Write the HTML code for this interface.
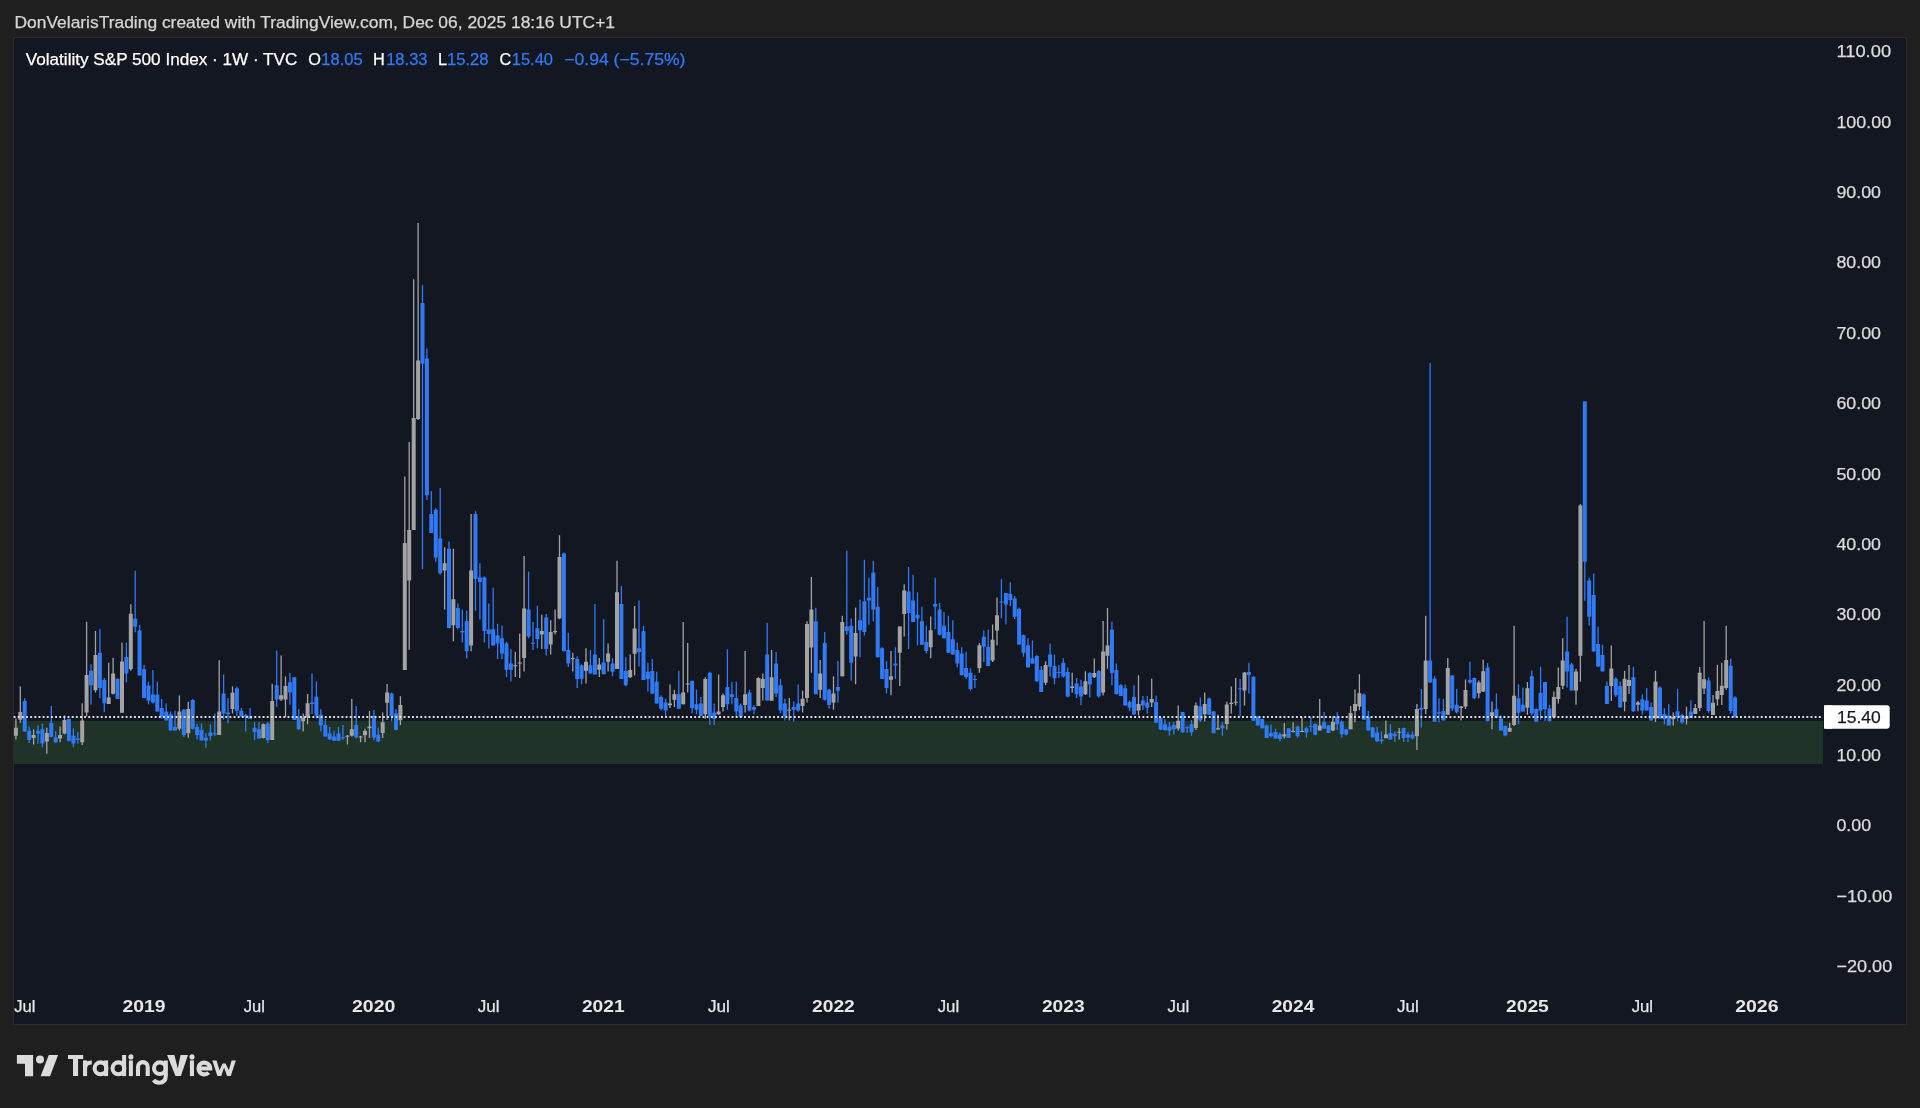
<!DOCTYPE html>
<html><head><meta charset="utf-8">
<style>
html,body{margin:0;padding:0;background:#1f1f1f;}
body{width:1920px;height:1108px;overflow:hidden;position:relative;}
svg{display:block;position:absolute;left:0;top:0;will-change:transform;}
text{font-family:"Liberation Sans",sans-serif;stroke:currentColor;stroke-width:0.25px;}
</style></head>
<body>
<svg width="1920" height="1108" viewBox="0 0 1920 1108">
<rect x="0" y="0" width="1920" height="1108" fill="#1f1f1f"/>
<text x="14.5" y="27.5" font-size="16.3" fill="#d6d6d6" color="#d6d6d6" textLength="600.5" lengthAdjust="spacingAndGlyphs">DonVelarisTrading created with TradingView.com, Dec 06, 2025 18:16 UTC+1</text>
<rect x="13.5" y="37.5" width="1893" height="987" fill="#131722" stroke="#2a2b2e" stroke-width="1"/>
<rect x="14" y="721" width="1809" height="43" fill="#1f3329"/>
<path d="M15.9 718.4V739.4 M20.3 686.6V722.7 M33.6 729.2V744.4 M46.8 727.8V753.8 M60.1 726.4V742.2 M64.5 715.5V734.3 M82.2 703.2V745.1 M86.6 621.7V716.2 M95.5 631V692.4 M108.7 662.8V704 M113.1 657.8V694.6 M122 642.6V712.6 M130.8 604.3V670.8 M179.4 695.4V730.6 M188.3 701.7V737.8 M219.2 660.2V735.1 M232.5 686.4V713.4 M263.4 723.5V738.6 M272.2 683.8V740.1 M281.1 655.6V701.1 M285.5 676.5V717 M303.2 713.4V731.4 M307.6 693.9V724.2 M347.4 735V744.4 M351.8 698.9V736.5 M360.6 735.7V742.2 M365 728.8V742.3 M369.5 710.9V738 M382.7 712.6V738 M387.1 683.9V720.1 M400.4 696.3V725 M404.8 476.5V670 M409.2 441.9V649.8 M413.7 279.3V530 M418.1 223V420 M444.6 547.3V609.4 M453.4 548.7V641.2 M471.1 514.1V651.3 M515.3 651.8V677 M519.7 633.7V677.9 M524.1 556.1V671.6 M541.8 614.8V649.1 M550.7 620.2V654.5 M555.1 609.4V634.6 M559.5 535.3V619.3 M572.8 652.7V671.6 M586 648.2V683.4 M599.3 658.1V677 M608.1 643.6V671.6 M617 560.8V669.1 M630.2 654.6V678.1 M634.6 605.9V675.4 M670 684.4V707.9 M674.4 689.8V707 M683.2 622.1V704.3 M687.7 642.9V692.5 M705.3 677.2V718.7 M718.6 674.5V715.1 M723 693.4V711.5 M745.1 651V712.4 M758.4 677.2V706.1 M762.8 673.6V700.6 M771.6 650.1V700.6 M789.3 697.9V720.5 M802.6 690.7V712.4 M807 621.2V702.5 M811.4 577V672.7 M820.2 660V697.9 M833.5 676.3V709.7 M842.3 615.8V676.3 M855.6 607.6V684.3 M891 650.9V695.2 M899.8 626.6V686.1 M904.2 584.2V636.5 M930.7 616.6V658.2 M979.4 642.9V672.8 M992.6 624.4V662 M997 597.6V645.2 M1045.6 661.3V685 M1072.2 672.8V692.7 M1085.4 671.2V695 M1094.3 658.6V678.1 M1103.1 621V695.4 M1107.5 608.1V668.7 M1138.5 675.2V715.6 M1151.7 678.8V707 M1178.2 705.5V730.8 M1195.9 702.6V730.1 M1204.7 692.5V721.4 M1218 714.7V729.4 M1226.8 701.7V729.4 M1231.3 686.6V713.6 M1235.7 677.9V705.5 M1244.5 671.9V705.5 M1284.3 722.9V738.6 M1293.1 722.3V732.6 M1302 716.9V732.1 M1319.7 699V730.4 M1332.9 716V731.2 M1350.6 705.9V729.3 M1355 689.5V722.3 M1359.4 674.3V710.3 M1385.9 720.5V738.1 M1399.2 728V739.4 M1416.9 704V750.1 M1425.7 615.7V714 M1447.8 657.9V714.8 M1461.1 705.9V720.5 M1465.5 679.4V709.1 M1478.8 680.6V698.3 M1483.2 659.8V692 M1492 701.5V729.3 M1509.7 723V731.8 M1514.1 625.7V726.1 M1527.4 681.9V714.8 M1553.9 691.4V718.6 M1558.3 667.4V703.4 M1562.7 638.3V688.9 M1576 668.7V704.8 M1580.4 504V681.7 M1611.3 645.5V701.1 M1624.6 670.8V711.2 M1629 665V693.9 M1637.9 701.1V711.2 M1655.5 670.8V722 M1673.2 712.6V725.6 M1686.5 706.8V724.4 M1695.3 703.9V713.8 M1699.7 666.9V710.9 M1704.1 621.1V693.9 M1713 695.1V715 M1717.4 665.1V705.6 M1721.8 662.8V705 M1726.2 625.8V689.8" stroke="#a3a3a3" stroke-width="1.3" fill="none"/>
<path d="M13.9 727.8h4v7.9h-4z M18.3 711.9h4v7.9h-4z M31.6 735h4v2.9h-4z M44.8 732.9h4v8.7h-4z M58.1 735h4v3.6h-4z M62.5 719.9h4v13.7h-4z M80.2 720.6h4v21.7h-4z M84.6 675.1h4v37.5h-4z M93.5 654.9h4v35.4h-4z M106.7 697.5h4v6.5h-4z M111.1 673.6h4v20.2h-4z M120 661.4h4v51.3h-4z M128.8 613.7h4v55.6h-4z M177.4 711.6h4v17.1h-4z M186.3 708.9h4v24.4h-4z M217.2 711.6h4v23.5h-4z M230.5 692.7h4v16.2h-4z M261.4 724.2h4v13.7h-4z M270.2 701.1h4v39h-4z M279.1 695.3h4v4.3h-4z M283.5 685.9h4v13.7h-4z M301.2 717.7h4v3.6h-4z M305.6 703.2h4v14.4h-4z M345.4 735.7h4v1h-4z M349.8 729.2h4v6.5h-4z M358.6 736.5h4v1h-4z M363 731h4v4.3h-4z M367.5 726.6h4v1.6h-4z M380.7 722.3h4v10.8h-4z M385.1 692.5h4v10.3h-4z M398.4 705h4v15.2h-4z M402.8 543h4v127h-4z M407.2 530h4v50.5h-4z M411.7 417.9h4v112.1h-4z M416.1 360.5h4v58.5h-4z M442.6 563.2h4v7.2h-4z M451.4 599.3h4v26h-4z M469.1 570.4h4v75.1h-4z M513.3 665.3h4v1h-4z M517.7 662.6h4v1h-4z M522.1 608.4h4v49.6h-4z M539.8 631h4v3.6h-4z M548.7 631.9h4v12.6h-4z M553.1 631h4v1.3h-4z M557.5 557h4v61.4h-4z M570.8 658.1h4v1h-4z M584 661.7h4v9h-4z M597.3 664.4h4v5.4h-4z M606.1 653.6h4v8.1h-4z M615 592.3h4v76.7h-4z M628.2 670h4v7.2h-4z M632.6 628.4h4v25.3h-4z M668 703.4h4v1.8h-4z M672.4 694.3h4v5.4h-4z M681.2 692.5h4v11.7h-4z M685.7 683.5h4v1h-4z M703.3 679h4v35.2h-4z M716.6 711.5h4v2.7h-4z M721 695.2h4v11.7h-4z M743.1 694.3h4v10.8h-4z M756.4 678.1h4v28h-4z M760.8 679h4v9h-4z M769.6 677.2h4v23.5h-4z M787.3 709.7h4v1h-4z M800.6 698.8h4v7.2h-4z M805 623.9h4v74h-4z M809.4 609.5h4v37.9h-4z M818.2 673.6h4v16.2h-4z M831.5 693.4h4v9h-4z M840.3 622.1h4v54.2h-4z M853.6 632.9h4v23.5h-4z M889 676.2h4v3.6h-4z M897.8 626.6h4v26.2h-4z M902.2 590.5h4v23.5h-4z M928.7 630.2h4v17.1h-4z M977.4 645.2h4v23h-4z M990.6 639.8h4v20.7h-4z M995 615.2h4v15.3h-4z M1043.6 665.1h4v17.6h-4z M1070.2 686.6h4v1.5h-4z M1083.4 681.2h4v13h-4z M1092.3 673h4v4.3h-4z M1101.1 651.4h4v41.2h-4z M1105.5 645.6h4v10.1h-4z M1136.5 704.1h4v6.5h-4z M1149.7 699h4v3.6h-4z M1176.2 720.7h4v7.9h-4z M1193.9 705.5h4v22.4h-4z M1202.7 704.1h4v10.1h-4z M1216 728.3h4v1.1h-4z M1224.8 704.4h4v19.5h-4z M1229.3 702.8h4v1.1h-4z M1233.7 701.7h4v1.1h-4z M1242.5 672.5h4v17.9h-4z M1282.3 734.2h4v2.2h-4z M1291.1 731h4v1h-4z M1300 731h4v1h-4z M1317.7 725.6h4v4.9h-4z M1330.9 721.7h4v8.8h-4z M1348.6 712.9h4v16.4h-4z M1353 704h4v6.9h-4z M1357.4 693.3h4v13.3h-4z M1383.9 734.4h4v3.8h-4z M1397.2 731.8h4v1h-4z M1414.9 709.1h4v27.2h-4z M1423.7 660.5h4v48.5h-4z M1445.8 668h4v46.8h-4z M1459.1 706.6h4v1.3h-4z M1463.5 690.1h4v16.4h-4z M1476.8 682.5h4v10.7h-4z M1481.2 671.2h4v20.2h-4z M1490 712.2h4v3.8h-4z M1507.7 728h4v3.8h-4z M1512.1 695.8h4v29.1h-4z M1525.4 688.2h4v19.6h-4z M1551.9 697.1h4v20.2h-4z M1556.3 687h4v12h-4z M1560.7 660.4h4v25.3h-4z M1574 671.6h4v18.8h-4z M1578.4 505.5h4v150.2h-4z M1609.3 668.6h4v17.3h-4z M1622.6 678.7h4v23.1h-4z M1627 680.1h4v5.8h-4z M1635.9 702.5h4v2.2h-4z M1653.5 681.6h4v36.8h-4z M1671.2 717h4v2.2h-4z M1684.5 716.2h4v2.9h-4z M1693.3 708h4v5.9h-4z M1697.7 672.8h4v35.2h-4z M1702.1 679.2h4v9.4h-4z M1711 702.7h4v12.3h-4z M1715.4 691h4v8.2h-4z M1719.8 685.7h4v9.4h-4z M1724.2 659.9h4v28.2h-4z" fill="#a3a3a3"/>
<path d="M24.7 698.2V732.1 M29.2 726.4V743 M38 725.6V743.7 M42.4 723.5V747.3 M51.3 706.1V737.2 M55.7 731.4V743 M68.9 718.4V741.5 M73.4 728.5V747.3 M77.8 732.1V743.7 M91 664.3V704.7 M99.9 628.9V698.2 M104.3 678V711.9 M117.5 678.7V698.9 M126.4 642.6V682.3 M135.2 570.8V632.2 M139.6 625V675.5 M144.1 664.7V698.1 M148.5 681.8V704.4 M152.9 670.1V703.5 M157.3 681.8V711.6 M161.7 699V718.8 M166.2 703.5V720.6 M170.6 711.6V730.6 M175 710.7V730.6 M183.8 708.9V736.9 M192.7 699V729.7 M197.1 724.3V739.6 M201.5 723.4V740.5 M205.9 733.3V747.7 M210.4 724.3V740.5 M214.8 713.4V736 M223.6 674.6V719.7 M228 698.1V723.4 M236.9 686.4V716.1 M241.3 708V717 M245.7 714.3V731.5 M250.1 708V718.8 M254.6 722V740.1 M259 722V738.6 M267.8 722V743 M276.7 650.5V706.9 M289.9 672.9V704.7 M294.3 677.3V719.9 M298.7 709V730 M312 673.6V714.1 M316.4 681.6V718.4 M320.8 709V731.4 M325.3 719.1V736.5 M329.7 727.1V740.1 M334.1 730.7V740.8 M338.5 727.1V740.8 M342.9 724.9V740.1 M356.2 706.1V738.6 M373.9 709.9V740.2 M378.3 727.7V742.3 M391.6 692.5V721.2 M396 709.3V730.4 M422.5 284.7V569 M426.9 348.6V500 M431.3 491V532.9 M435.8 508.3V561.7 M440.2 488.1V574.7 M449 541.5V628.2 M457.9 603.6V629.6 M462.3 609.4V642.6 M466.7 610.8V658.5 M475.5 511.2V610.8 M479.9 563.2V619.5 M484.4 576.2V642.6 M488.8 603.6V648.4 M493.2 587.7V645.5 M497.6 623.8V659 M502 625.6V659 M506.5 641.8V677 M510.9 649.1V681.6 M528.6 571.4V638.2 M533 622V650 M537.4 605.7V648.2 M546.2 613.9V655.4 M563.9 552.5V651.8 M568.3 632.8V667.1 M577.2 656.3V687.9 M581.6 664.4V684.3 M590.4 650V673.4 M594.9 603.9V674.3 M603.7 619.3V674.3 M612.5 658.2V676.3 M621.4 586V679 M625.8 657.3V686.2 M639 600.5V666.4 M643.5 625.7V679.9 M647.9 662.7V691.6 M652.3 659.1V694.3 M656.7 671.8V703.4 M661.1 695.2V710.6 M665.6 698.8V716 M678.8 670.9V708.8 M692.1 680.8V713.3 M696.5 689.8V714.2 M700.9 697V716 M709.8 671.8V725 M714.2 703.4V725 M727.4 649.2V709.7 M731.9 681.7V704.3 M736.3 681.7V716.9 M740.7 703.4V717.8 M749.5 689.8V711.5 M754 705.2V714.2 M767.2 623V700.6 M776.1 651.9V697 M780.5 679V713.3 M784.9 698.8V720.5 M793.7 701.6V721.4 M798.2 684.4V711.5 M815.8 607.7V694.3 M824.7 632.1V700.6 M829.1 688.9V708.8 M837.9 660.9V702.5 M846.8 550.8V634.8 M851.2 618.4V680.7 M860 599.5V657.3 M864.4 559.8V635.6 M868.9 577.8V624.8 M873.3 560.7V621.2 M877.7 586.9V657.3 M882.1 647.3V678.9 M886.5 660.9V693.4 M895.4 647.3V678.9 M908.6 567V649.1 M913.1 575.1V622.1 M917.5 592.3V645.5 M921.9 606.7V644.6 M926.3 625.7V653.6 M935.2 577.8V629.3 M939.6 603.1V635.6 M944 612.1V638.3 M948.4 615.7V652.7 M952.8 620.3V654.5 M957.3 642.8V667.2 M961.7 647.3V675.3 M966.1 651.8V678.9 M970.5 668.2V690.4 M974.9 675.1V688.1 M983.8 630.6V662 M988.2 629.8V665.9 M1001.4 579.2V618.3 M1005.9 593V624.4 M1010.3 582.2V606 M1014.7 596.1V619.1 M1019.1 607.6V644.4 M1023.5 634.4V656.7 M1028 638.2V667.4 M1032.4 640.6V663.6 M1036.8 655.1V682 M1041.2 665.9V691.9 M1050.1 643.6V676.6 M1054.5 654.4V684.3 M1058.9 665.1V678.1 M1063.3 658.2V677.4 M1067.7 667.4V697.3 M1076.6 678.1V698.1 M1081 679.7V705 M1089.8 672.3V697.6 M1098.7 670.1V697.6 M1111.9 621.8V685.3 M1116.4 663.6V694.7 M1120.8 683.9V696.1 M1125.2 684.6V705.5 M1129.6 700.5V711.3 M1134 685.3V714.9 M1142.9 696.1V709.9 M1147.3 696.1V713.5 M1156.1 695.4V722.9 M1160.6 717.1V730.1 M1165 719.2V730.8 M1169.4 722.1V735.8 M1173.8 722.1V734.4 M1182.6 712V733 M1187.1 725.7V733 M1191.5 720V735.8 M1200.3 697.6V722.1 M1209.2 697.4V714.7 M1213.6 710.9V733.1 M1222.4 721.8V735.8 M1240.1 679V716.4 M1248.9 662.7V693.6 M1253.4 676.3V720.7 M1257.8 715.8V725.6 M1262.2 718.5V728.3 M1266.6 724.5V738 M1271 724.5V737.5 M1275.5 728.8V738.6 M1279.9 732.6V741.3 M1288.7 728.3V738 M1297.6 725.6V738 M1306.4 726.6V737.5 M1310.8 716.9V732.1 M1315.2 723.4V735.3 M1324.1 712V727.7 M1328.5 724.9V733.1 M1337.3 712.2V729.9 M1341.8 720.5V737.5 M1346.2 728.7V735.6 M1363.8 693.3V719.8 M1368.3 711V730.6 M1372.7 726.8V737.5 M1377.1 726.8V741.9 M1381.5 731.2V743.8 M1390.4 724.2V739.4 M1394.8 731.2V741.9 M1403.6 727.4V741.9 M1408 731.8V741.9 M1412.5 731.2V739.4 M1421.3 688.9V727.4 M1430.1 363V683 M1434.6 676.2V721.7 M1439 698.3V722.3 M1443.4 699V720.5 M1452.2 675V711 M1456.7 688.9V713.5 M1469.9 661.7V683.8 M1474.3 677.5V699 M1487.6 663V721.7 M1496.4 693.3V718.6 M1500.9 715.4V730.6 M1505.3 725.5V736.2 M1518.5 684.4V724.2 M1522.9 687.6V711.6 M1531.8 670.5V715.4 M1536.2 708.4V721.7 M1540.6 666.8V719.8 M1545 681.9V721.1 M1549.5 704.7V721.7 M1567.1 616.7V687.5 M1571.6 663V690.4 M1584.8 401.6V600.8 M1589.2 577.7V625.4 M1593.7 573.4V651.4 M1598.1 626.7V667.1 M1602.5 644.8V671.5 M1606.9 681.6V704 M1615.8 677.3V696.8 M1620.2 681.6V707.6 M1633.4 667.1V711.9 M1642.3 694.6V714.8 M1646.7 688.1V710.5 M1651.1 702.5V720.6 M1660 686.6V718.4 M1664.4 708.3V724.2 M1668.8 704V725.6 M1677.6 688.8V721.3 M1682.1 713.8V723.8 M1690.9 700.3V717.9 M1708.6 677.5V712.7 M1730.7 658.7V713.8 M1735.1 696.2V717.4" stroke="#317af5" stroke-width="1.3" fill="none"/>
<path d="M22.7 701.1h4v30.3h-4z M27.2 730.7h4v9.4h-4z M36 730.7h4v2.9h-4z M40.4 729.2h4v14.4h-4z M49.3 722.7h4v14.4h-4z M53.7 737.2h4v5.1h-4z M66.9 719.1h4v21.7h-4z M71.4 735.7h4v7.9h-4z M75.8 738.6h4v1.4h-4z M89 670.8h4v14.4h-4z M97.9 652.7h4v35.4h-4z M102.3 680.1h4v23.1h-4z M115.5 678.7h4v20.2h-4z M124.4 657h4v16.6h-4z M133.2 618.7h4v8.1h-4z M137.6 630.4h4v45.1h-4z M142.1 669.2h4v28.9h-4z M146.5 685.5h4v15.3h-4z M150.9 694.5h4v8.1h-4z M155.3 694.5h4v17.1h-4z M159.7 708h4v9h-4z M164.2 711.6h4v9h-4z M168.6 714.3h4v16.2h-4z M173 727h4v3.6h-4z M181.8 709.8h4v25.3h-4z M190.7 699.9h4v28.9h-4z M195.1 727h4v8.1h-4z M199.5 729.7h4v10.8h-4z M203.9 737.8h4v2.7h-4z M208.4 732.4h4v3.6h-4z M212.8 733.3h4v1h-4z M221.6 693.6h4v19.9h-4z M226 712.5h4v1.8h-4z M234.9 688.2h4v22.6h-4z M239.3 710.7h4v5.4h-4z M243.7 715.2h4v1.8h-4z M248.1 716.1h4v2.7h-4z M252.6 727.8h4v4.3h-4z M257 729.2h4v9.4h-4z M265.8 723.5h4v16.6h-4z M274.7 685.2h4v14.4h-4z M287.9 682.3h4v10.1h-4z M292.3 677.3h4v42.6h-4z M296.7 717.7h4v11.6h-4z M310 702.5h4v1.4h-4z M314.4 696.8h4v18.8h-4z M318.8 714.8h4v10.8h-4z M323.3 724.9h4v11.6h-4z M327.7 733.6h4v5.8h-4z M332.1 736.5h4v4.3h-4z M336.5 733.6h4v7.2h-4z M340.9 737.2h4v1.4h-4z M354.2 724.9h4v12.3h-4z M371.9 715.8h4v21.7h-4z M376.3 734.8h4v6.5h-4z M389.6 693.6h4v22.7h-4z M394 713.6h4v16.2h-4z M420.5 303.1h4v60.7h-4z M424.9 358.4h4v136.9h-4z M429.3 514.1h4v18.8h-4z M433.8 509.7h4v47.7h-4z M438.2 538.6h4v34.7h-4z M447 548.7h4v79.4h-4z M455.9 607.9h4v20.2h-4z M460.3 631h4v1.4h-4z M464.7 620.9h4v30.3h-4z M473.5 514.1h4v65h-4z M477.9 577.6h4v4.3h-4z M482.4 577.6h4v53.4h-4z M486.8 629.6h4v4.3h-4z M491.2 629.2h4v16.2h-4z M495.6 635.5h4v8.1h-4z M500 638.2h4v15.3h-4z M504.5 643.6h4v26.2h-4z M508.9 663.5h4v6.3h-4z M526.6 609.4h4v27.1h-4z M531 642.7h4v1h-4z M535.4 628.3h4v10.8h-4z M544.2 617.5h4v31.6h-4z M561.9 553.4h4v97.5h-4z M566.3 650h4v13.5h-4z M575.2 659h4v19.9h-4z M579.6 665.3h4v13.5h-4z M588.4 665.3h4v8.1h-4z M592.9 654.5h4v19.9h-4z M601.7 662.6h4v11.7h-4z M610.5 663.6h4v8.1h-4z M619.4 604.1h4v74.9h-4z M623.8 670.9h4v14.4h-4z M637 648.3h4v3.6h-4z M641.5 631.2h4v48.7h-4z M645.9 671.8h4v7.2h-4z M650.3 670.9h4v22.6h-4z M654.7 681.7h4v21.7h-4z M659.1 697h4v11.7h-4z M663.6 702.5h4v8.1h-4z M676.8 694.3h4v14.4h-4z M690.1 680.8h4v27.1h-4z M694.5 704.3h4v5.4h-4z M698.9 703.4h4v12.6h-4z M707.8 672.7h4v43.3h-4z M712.2 712.4h4v6.3h-4z M725.4 687.1h4v17.1h-4z M729.9 694.3h4v2.7h-4z M734.3 697.9h4v13.5h-4z M738.7 705.2h4v11.7h-4z M747.5 692.5h4v18.1h-4z M752 707h4v2.7h-4z M765.2 654.6h4v46h-4z M774.1 663.6h4v29.8h-4z M778.5 685.3h4v25.3h-4z M782.9 703.4h4v12.6h-4z M791.7 707h4v2.7h-4z M796.2 703.4h4v7.2h-4z M813.8 621.2h4v73.1h-4z M822.7 642.9h4v56.9h-4z M827.1 689.8h4v15.3h-4z M835.9 687.1h4v3.6h-4z M844.8 626.6h4v4.5h-4z M849.2 625.7h4v37h-4z M858 620.3h4v9.9h-4z M862.4 601.3h4v30.7h-4z M866.9 597.7h4v2.7h-4z M871.3 572.4h4v37h-4z M875.7 606.7h4v50.5h-4z M880.1 648.2h4v30.7h-4z M884.5 669h4v19h-4z M893.4 663.6h4v1.8h-4z M906.6 591.4h4v21.7h-4z M911.1 600.4h4v21.7h-4z M915.5 614.8h4v3.6h-4z M919.9 621.2h4v23.5h-4z M924.3 641.9h4v9h-4z M933.2 604h4v2.7h-4z M937.6 609.4h4v25.3h-4z M942 625.7h4v12.6h-4z M946.4 632h4v20.8h-4z M950.8 639.2h4v15.3h-4z M955.3 650h4v13.5h-4z M959.7 653.6h4v21.7h-4z M964.1 668.1h4v9h-4z M968.5 672.8h4v16.1h-4z M972.9 678.9h4v1h-4z M981.8 636.7h4v10h-4z M986.2 646.7h4v19.2h-4z M999.4 601.4h4v1h-4z M1003.9 593h4v11.5h-4z M1008.3 593.8h4v6.1h-4z M1012.7 598.4h4v18.4h-4z M1017.1 609.1h4v35.3h-4z M1021.5 635.2h4v17.6h-4z M1026 645.2h4v22.2h-4z M1030.4 658.2h4v5.4h-4z M1034.8 655.9h4v25.3h-4z M1039.2 669.7h4v22.2h-4z M1048.1 654.4h4v12.3h-4z M1052.5 665.9h4v12.3h-4z M1056.9 672h4v1h-4z M1061.3 662.8h4v13.8h-4z M1065.7 672h4v24.5h-4z M1074.6 683.5h4v10.7h-4z M1079 686.6h4v10h-4z M1087.8 673h4v11.6h-4z M1096.7 670.9h4v25.3h-4z M1109.9 629.7h4v43.3h-4z M1114.4 670.1h4v23.8h-4z M1118.8 685.3h4v10.8h-4z M1123.2 688.2h4v17.3h-4z M1127.6 701.9h4v5.8h-4z M1132 696.9h4v17.3h-4z M1140.9 700.5h4v5.1h-4z M1145.3 702.6h4v5.1h-4z M1154.1 701.9h4v20.9h-4z M1158.6 717.8h4v11.6h-4z M1163 724.3h4v5.8h-4z M1167.4 726.5h4v4.3h-4z M1171.8 725h4v4.3h-4z M1180.6 712h4v20.2h-4z M1185.1 727.2h4v1h-4z M1189.5 724.3h4v7.9h-4z M1198.3 706.2h4v14.4h-4z M1207.2 698.5h4v16.2h-4z M1211.6 711.5h4v21.7h-4z M1220.4 725.6h4v2.7h-4z M1238.1 688.2h4v1.1h-4z M1246.9 671.9h4v3.2h-4z M1251.4 676.8h4v43.9h-4z M1255.8 716.9h4v8.7h-4z M1260.2 719.1h4v9.2h-4z M1264.6 725.6h4v12.5h-4z M1269 733.1h4v3.2h-4z M1273.5 732.1h4v6.5h-4z M1277.9 734.2h4v4.9h-4z M1286.7 728.3h4v9.7h-4z M1295.6 726.6h4v9.7h-4z M1304.4 728.3h4v4.3h-4z M1308.8 726.1h4v1h-4z M1313.2 723.9h4v10.8h-4z M1322.1 722.3h4v6.5h-4z M1326.5 725.5h4v7.6h-4z M1335.3 716.7h4v7.6h-4z M1339.8 721.7h4v12.6h-4z M1344.2 729.3h4v5.1h-4z M1361.8 694.5h4v25.3h-4z M1366.3 716.7h4v13.9h-4z M1370.7 727.4h4v10.1h-4z M1375.1 732.5h4v8.8h-4z M1379.5 739.4h4v1.9h-4z M1388.4 733.1h4v6.3h-4z M1392.8 733.7h4v2.5h-4z M1401.6 728h4v10.1h-4z M1406 734.4h4v3.2h-4z M1410.5 734.4h4v3.8h-4z M1419.3 707.8h4v1.9h-4z M1428.1 660.5h4v22h-4z M1432.6 678.8h4v43h-4z M1437 712.2h4v1.3h-4z M1441.4 711h4v9.5h-4z M1450.2 675.6h4v32.9h-4z M1454.7 704.7h4v7.6h-4z M1467.9 680h4v2.5h-4z M1472.3 678.1h4v20.2h-4z M1485.6 667.4h4v53.7h-4z M1494.4 709.1h4v8.8h-4z M1498.9 718.6h4v12h-4z M1503.3 726.1h4v9.5h-4z M1516.5 698.3h4v14.5h-4z M1520.9 704.7h4v6.9h-4z M1529.8 676.2h4v37.3h-4z M1534.2 709.1h4v12.6h-4z M1538.6 692.7h4v17.7h-4z M1543 681.9h4v27.2h-4z M1547.5 708.4h4v12.6h-4z M1565.1 651.4h4v20.2h-4z M1569.6 664.4h4v26h-4z M1582.8 401.6h4v160.2h-4z M1587.2 580.6h4v36.1h-4z M1591.7 595h4v56.4h-4z M1596.1 644h4v22.4h-4z M1600.5 654.9h4v16.6h-4z M1604.9 685.9h4v18.1h-4z M1613.8 678.7h4v16.6h-4z M1618.2 685.9h4v21.7h-4z M1631.4 677.3h4v33.9h-4z M1640.3 699.6h4v10.8h-4z M1644.7 700.4h4v10.1h-4z M1649.1 706.9h4v13.7h-4z M1658 687.4h4v31h-4z M1662.4 714.1h4v5.1h-4z M1666.8 715.5h4v10.1h-4z M1675.6 711.2h4v5.8h-4z M1680.1 715h4v7.6h-4z M1688.9 711.5h4v6.5h-4z M1706.6 680.4h4v30.5h-4z M1728.7 665.7h4v45.2h-4z M1733.1 697.4h4v19.9h-4z" fill="#317af5"/>

<line x1="13.6" y1="717" x2="1823" y2="717" stroke="#dedede" stroke-width="2" stroke-dasharray="1.9 2.25"/>

<g font-size="16.3" fill="#ffffff" color="#ffffff">
<text x="25.8" y="65" textLength="271.5" lengthAdjust="spacingAndGlyphs">Volatility S&amp;P 500 Index · 1W · TVC</text>
<text x="308.2" y="65">O</text>
<text x="373" y="65">H</text>
<text x="438" y="65">L</text>
<text x="499.4" y="65">C</text>
</g>
<g font-size="16.3" fill="#3179f5" color="#3179f5">
<text x="321.3" y="65" textLength="41.3" lengthAdjust="spacingAndGlyphs">18.05</text>
<text x="386.2" y="65" textLength="41.3" lengthAdjust="spacingAndGlyphs">18.33</text>
<text x="447" y="65" textLength="41.6" lengthAdjust="spacingAndGlyphs">15.28</text>
<text x="511.8" y="65" textLength="41.2" lengthAdjust="spacingAndGlyphs">15.40</text>
<text x="564.3" y="65" textLength="121.1" lengthAdjust="spacingAndGlyphs">−0.94 (−5.75%)</text>
</g>
<g font-size="16.8" fill="#dcdcdc" color="#dcdcdc"><text x="1836.4" y="57.2" textLength="54.7" lengthAdjust="spacingAndGlyphs">110.00</text>
<text x="1836.4" y="127.6" textLength="54.7" lengthAdjust="spacingAndGlyphs">100.00</text>
<text x="1836.4" y="198.0" textLength="44.6" lengthAdjust="spacingAndGlyphs">90.00</text>
<text x="1836.4" y="268.4" textLength="44.6" lengthAdjust="spacingAndGlyphs">80.00</text>
<text x="1836.4" y="338.7" textLength="44.6" lengthAdjust="spacingAndGlyphs">70.00</text>
<text x="1836.4" y="409.1" textLength="44.6" lengthAdjust="spacingAndGlyphs">60.00</text>
<text x="1836.4" y="479.5" textLength="44.6" lengthAdjust="spacingAndGlyphs">50.00</text>
<text x="1836.4" y="549.9" textLength="44.6" lengthAdjust="spacingAndGlyphs">40.00</text>
<text x="1836.4" y="620.3" textLength="44.6" lengthAdjust="spacingAndGlyphs">30.00</text>
<text x="1836.4" y="690.6" textLength="44.6" lengthAdjust="spacingAndGlyphs">20.00</text>
<text x="1836.4" y="761.0" textLength="44.6" lengthAdjust="spacingAndGlyphs">10.00</text>
<text x="1836.4" y="831.4" textLength="34.7" lengthAdjust="spacingAndGlyphs">0.00</text>
<text x="1836.4" y="901.8" textLength="55.8" lengthAdjust="spacingAndGlyphs">−10.00</text>
<text x="1836.4" y="972.2" textLength="55.8" lengthAdjust="spacingAndGlyphs">−20.00</text></g>
<rect x="1824" y="705.3" width="65.7" height="23.4" rx="3" fill="#ffffff"/>
<rect x="1824" y="705.3" width="8" height="23.4" fill="#ffffff"/>
<text x="1837.1" y="723" font-size="16.8" fill="#131722" color="#131722" textLength="43.7" lengthAdjust="spacingAndGlyphs">15.40</text>
<g font-size="16.5" fill="#e6e6e6" color="#e6e6e6"><text x="14.2" y="1012.3" textLength="21.2" lengthAdjust="spacingAndGlyphs">Jul</text>
<text x="122.5" y="1012.3" textLength="43.1" lengthAdjust="spacingAndGlyphs" font-weight="bold" font-size="17" style="stroke-width:0">2019</text>
<text x="243.8" y="1012.3" textLength="21.2" lengthAdjust="spacingAndGlyphs">Jul</text>
<text x="352.0" y="1012.3" textLength="43.4" lengthAdjust="spacingAndGlyphs" font-weight="bold" font-size="17" style="stroke-width:0">2020</text>
<text x="477.7" y="1012.3" textLength="21.9" lengthAdjust="spacingAndGlyphs">Jul</text>
<text x="581.9" y="1012.3" textLength="42.7" lengthAdjust="spacingAndGlyphs" font-weight="bold" font-size="17" style="stroke-width:0">2021</text>
<text x="707.9" y="1012.3" textLength="21.9" lengthAdjust="spacingAndGlyphs">Jul</text>
<text x="812.0" y="1012.3" textLength="42.8" lengthAdjust="spacingAndGlyphs" font-weight="bold" font-size="17" style="stroke-width:0">2022</text>
<text x="937.7" y="1012.3" textLength="21.5" lengthAdjust="spacingAndGlyphs">Jul</text>
<text x="1041.9" y="1012.3" textLength="42.7" lengthAdjust="spacingAndGlyphs" font-weight="bold" font-size="17" style="stroke-width:0">2023</text>
<text x="1167.5" y="1012.3" textLength="21.7" lengthAdjust="spacingAndGlyphs">Jul</text>
<text x="1271.7" y="1012.3" textLength="42.7" lengthAdjust="spacingAndGlyphs" font-weight="bold" font-size="17" style="stroke-width:0">2024</text>
<text x="1397.1" y="1012.3" textLength="21.7" lengthAdjust="spacingAndGlyphs">Jul</text>
<text x="1506.0" y="1012.3" textLength="42.8" lengthAdjust="spacingAndGlyphs" font-weight="bold" font-size="17" style="stroke-width:0">2025</text>
<text x="1631.7" y="1012.3" textLength="21.4" lengthAdjust="spacingAndGlyphs">Jul</text>
<text x="1735.2" y="1012.3" textLength="43.3" lengthAdjust="spacingAndGlyphs" font-weight="bold" font-size="17" style="stroke-width:0">2026</text></g>
<g fill="#dbdbdb">
<path d="M16.9 1055H33.1V1076.25H25V1063.75H16.9Z"/>
<circle cx="40" cy="1059.4" r="4"/>
<path d="M48.75 1055H58.1L50 1076.25H40.6Z"/>
<path d="M68 1055H83.2V1059.1H78.1V1076.1H73V1059.1H68Z"/>
<rect x="83" y="1060.4" width="4.1" height="15.7"/>
<path d="M85 1068.5Q85 1062.4 91.8 1062.4" fill="none" stroke="#dbdbdb" stroke-width="4"/>
<circle cx="100.5" cy="1068.3" r="5.9" fill="none" stroke="#dbdbdb" stroke-width="4.1"/>
<rect x="104.1" y="1060.4" width="4" height="15.7"/>
<circle cx="118.4" cy="1068.3" r="5.9" fill="none" stroke="#dbdbdb" stroke-width="4.1"/>
<rect x="122.1" y="1055" width="4" height="21.1"/>
<rect x="128.9" y="1060.4" width="4" height="15.7"/>
<circle cx="130.9" cy="1056.9" r="2.55"/>
<path d="M138 1076.1V1067A4.85 4.85 0 0 1 147.7 1067V1076.1" fill="none" stroke="#dbdbdb" stroke-width="4.1"/>
<circle cx="159.8" cy="1068.2" r="5.8" fill="none" stroke="#dbdbdb" stroke-width="4.1"/>
<path d="M165.8 1060.4V1075.5Q165.8 1082.7 159.2 1082.7Q155.5 1082.7 153.6 1080" fill="none" stroke="#dbdbdb" stroke-width="4.1"/>
<path d="M167.1 1055H174.4L177.8 1068.5L180.5 1055H188L180.9 1076.1H175.5Z"/>
<rect x="189.9" y="1060.4" width="4.1" height="15.7"/>
<circle cx="192" cy="1056.9" r="2.55"/>
<path d="M198.4 1068.5H210.25A5.9 5.9 0 1 0 208.6 1072.6" fill="none" stroke="#dbdbdb" stroke-width="4.1"/>
<path d="M212.3 1060.4H216.6L219.5 1070.3L222.6 1063.4H225.6L228.8 1070.3L231.6 1060.4H235.8L230.8 1076.1H227L224.1 1067.6L221.3 1076.1H217.4Z"/>
</g>
</svg>
</body></html>
